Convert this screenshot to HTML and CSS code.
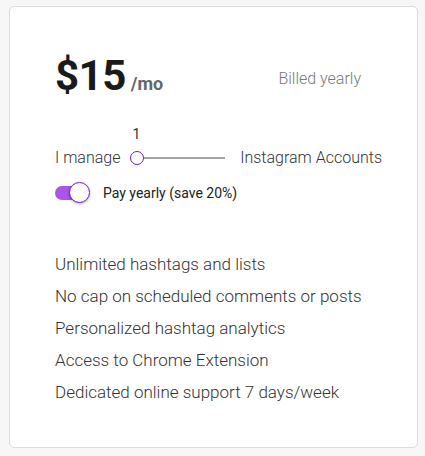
FILE: index.html
```html
<!DOCTYPE html>
<html>
<head>
<meta charset="utf-8">
<link rel="stylesheet" href="styles.css">
</head>
<body>
<div class="card">
  <div class="price-row">
    <div class="price"><span class="amount">$15</span><span class="per">/mo</span></div>
    <div class="billed">Billed yearly</div>
  </div>
  <div class="slider-row">
    <span class="label">I manage</span>
    <div class="slider">
      <span class="value">1</span>
      <span class="thumb"></span>
      <span class="track"></span>
    </div>
    <span class="label">Instagram Accounts</span>
  </div>
  <div class="toggle-row">
    <div class="toggle"><span class="knob"></span></div>
    <span class="toggle-label">Pay yearly (save 20%)</span>
  </div>
  <ul class="features">
    <li>Unlimited hashtags and lists</li>
    <li>No cap on scheduled comments or posts</li>
    <li>Personalized hashtag analytics</li>
    <li>Access to Chrome Extension</li>
    <li>Dedicated online support 7 days/week</li>
  </ul>
</div>
</body>
</html>
```
FILE: styles.css
```css
html, body { margin: 0; padding: 0; }
body {
  background: #f7f7f7;
  font-family: Roboto, "Liberation Sans", sans-serif;
  color: #222;
  padding: 6px 8px 8px 9px;
}
.card {
  box-sizing: border-box;
  width: 409px;
  height: 442px;
  background: #fff;
  border: 1px solid #dcdcdc;
  border-radius: 5px;
  padding: 44px 35px 0 45px;
}
.price-row {
  display: flex;
  align-items: center;
  justify-content: space-between;
}
.price { display: flex; align-items: baseline; }
.amount {
  font-size: 42px;
  font-weight: 700;
  color: #1a1a1a;
  letter-spacing: -0.5px;
}
.per {
  font-size: 18px;
  font-weight: 700;
  color: #666;
  margin-left: 5px;
}
.billed {
  font-size: 16px;
  font-weight: 300;
  color: #777;
  margin-right: 21px;
  margin-top: 6px;
}
.slider-row {
  display: flex;
  align-items: center;
  margin-top: 48px;
  font-size: 16px;
  font-weight: 300;
  color: #333;
  white-space: nowrap;
}
.label { line-height: 20px; }
.slider {
  position: relative;
  display: flex;
  align-items: center;
  width: 95px;
  margin: 0 15px 0 10px;
  height: 20px;
}
.value {
  position: absolute;
  left: 2px;
  top: -22px;
  font-size: 14px;
  line-height: 16px;
  font-weight: 400;
  color: #333;
}
.thumb {
  box-sizing: border-box;
  width: 14px;
  height: 14px;
  border: 1.5px solid #6a1bd6;
  border-radius: 50%;
  background: #fff;
  flex: none;
}
.track {
  flex: 1;
  height: 2px;
  background: #a3a3a3;
}
.toggle-row {
  display: flex;
  align-items: center;
  margin-top: 17px;
}
.toggle {
  position: relative;
  width: 34px;
  height: 14px;
  border-radius: 7px;
  background: #a855e8;
  margin-right: 14px;
}
.knob {
  position: absolute;
  box-sizing: border-box;
  right: -1px;
  top: -4px;
  width: 21px;
  height: 21px;
  border-radius: 50%;
  background: #fff;
  border: 1.5px solid #6a1bd6;
  box-shadow: 0 1px 3px rgba(0,0,0,0.3);
}
.toggle-label {
  font-size: 14px;
  font-weight: 400;
  color: #222;
}
.features {
  list-style: none;
  margin: 53px 0 0;
  padding: 0;
  font-size: 17px;
  font-weight: 300;
  color: #333;
}
.features li {
  line-height: 20px;
  margin-bottom: 12px;
}
```
